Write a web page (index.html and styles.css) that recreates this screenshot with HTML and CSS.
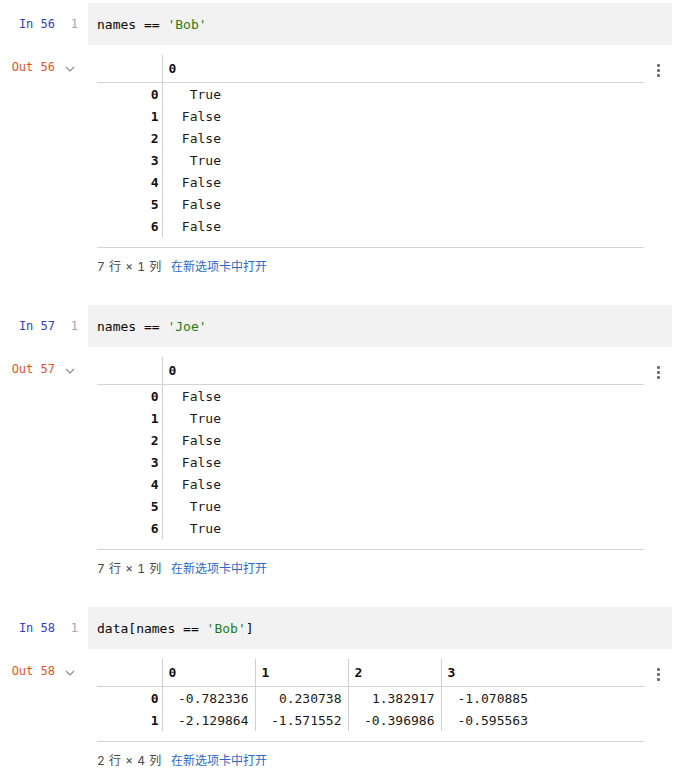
FILE: index.html
```html
<!DOCTYPE html>
<html>
<head>
<meta charset="utf-8">
<link rel="stylesheet" href="styles.css">
</head>
<body>
<div class="notebook">

  <div class="cell">
    <div class="in-row">
      <div class="prompt in">In 56</div>
      <div class="lineno">1</div>
      <div class="code">names == <span class="str">'Bob'</span></div>
    </div>
    <div class="out-row">
      <div class="prompt out">Out 56</div>
      <div class="toggle"><svg width="10" height="6" viewBox="0 0 10 6"><path d="M1 1 L5 5 L9 1" fill="none" stroke="#8c8c8c" stroke-width="1.2"/></svg></div>
      <div class="output">
        <table class="df">
          <colgroup><col class="c-idx"><col class="c-narrow"><col></colgroup>
          <thead><tr><th class="idx"></th><th class="last">0</th><th class="fill"></th></tr></thead>
          <tbody>
            <tr><th class="idx">0</th><td class="last">True</td><td class="fill"></td></tr>
            <tr><th class="idx">1</th><td class="last">False</td><td class="fill"></td></tr>
            <tr><th class="idx">2</th><td class="last">False</td><td class="fill"></td></tr>
            <tr><th class="idx">3</th><td class="last">True</td><td class="fill"></td></tr>
            <tr><th class="idx">4</th><td class="last">False</td><td class="fill"></td></tr>
            <tr><th class="idx">5</th><td class="last">False</td><td class="fill"></td></tr>
            <tr><th class="idx">6</th><td class="last">False</td><td class="fill"></td></tr>
          </tbody>
        </table>
        <div class="footer"><span class="dims">7 行 × 1 列</span><span class="link">在新选项卡中打开</span></div>
      </div>
      <div class="kebab"><span></span><span></span><span></span></div>
    </div>
  </div>

  <div class="cell">
    <div class="in-row">
      <div class="prompt in">In 57</div>
      <div class="lineno">1</div>
      <div class="code">names == <span class="str">'Joe'</span></div>
    </div>
    <div class="out-row">
      <div class="prompt out">Out 57</div>
      <div class="toggle"><svg width="10" height="6" viewBox="0 0 10 6"><path d="M1 1 L5 5 L9 1" fill="none" stroke="#8c8c8c" stroke-width="1.2"/></svg></div>
      <div class="output">
        <table class="df">
          <colgroup><col class="c-idx"><col class="c-narrow"><col></colgroup>
          <thead><tr><th class="idx"></th><th class="last">0</th><th class="fill"></th></tr></thead>
          <tbody>
            <tr><th class="idx">0</th><td class="last">False</td><td class="fill"></td></tr>
            <tr><th class="idx">1</th><td class="last">True</td><td class="fill"></td></tr>
            <tr><th class="idx">2</th><td class="last">False</td><td class="fill"></td></tr>
            <tr><th class="idx">3</th><td class="last">False</td><td class="fill"></td></tr>
            <tr><th class="idx">4</th><td class="last">False</td><td class="fill"></td></tr>
            <tr><th class="idx">5</th><td class="last">True</td><td class="fill"></td></tr>
            <tr><th class="idx">6</th><td class="last">True</td><td class="fill"></td></tr>
          </tbody>
        </table>
        <div class="footer"><span class="dims">7 行 × 1 列</span><span class="link">在新选项卡中打开</span></div>
      </div>
      <div class="kebab"><span></span><span></span><span></span></div>
    </div>
  </div>

  <div class="cell">
    <div class="in-row">
      <div class="prompt in">In 58</div>
      <div class="lineno">1</div>
      <div class="code">data[names == <span class="str">'Bob'</span>]</div>
    </div>
    <div class="out-row">
      <div class="prompt out">Out 58</div>
      <div class="toggle"><svg width="10" height="6" viewBox="0 0 10 6"><path d="M1 1 L5 5 L9 1" fill="none" stroke="#8c8c8c" stroke-width="1.2"/></svg></div>
      <div class="output">
        <table class="df">
          <colgroup><col class="c-idx"><col class="c-wide"><col class="c-wide"><col class="c-wide"><col class="c-wide"><col></colgroup>
          <thead><tr><th class="idx"></th><th>0</th><th>1</th><th>2</th><th class="last">3</th><th class="fill"></th></tr></thead>
          <tbody>
            <tr><th class="idx">0</th><td>-0.782336</td><td>0.230738</td><td>1.382917</td><td class="last">-1.070885</td><td class="fill"></td></tr>
            <tr><th class="idx">1</th><td>-2.129864</td><td>-1.571552</td><td>-0.396986</td><td class="last">-0.595563</td><td class="fill"></td></tr>
          </tbody>
        </table>
        <div class="footer"><span class="dims">2 行 × 4 列</span><span class="link">在新选项卡中打开</span></div>
      </div>
      <div class="kebab"><span></span><span></span><span></span></div>
    </div>
  </div>

</div>
</body>
</html>
```

FILE: styles.css
```css
html, body {
  margin: 0;
  padding: 0;
  background: #ffffff;
}

.notebook {
  width: 679px;
  padding-top: 3px;
  font-family: "DejaVu Sans Mono", "Liberation Mono", monospace;
}

.cell {
  margin-bottom: 30px;
}

.in-row {
  display: flex;
  align-items: center;
  height: 42px;
}

.prompt {
  width: 55px;
  flex: none;
  text-align: right;
  font-size: 12px;
  line-height: 16px;
}

.prompt.in {
  color: #2f3fc4;
}

.prompt.out {
  color: #e5522a;
}

.lineno {
  width: 23px;
  flex: none;
  padding-right: 10px;
  text-align: right;
  font-size: 12px;
  color: #a6a6a6;
}

.code {
  flex: 1;
  height: 42px;
  margin-right: 7px;
  padding-left: 9px;
  display: flex;
  align-items: center;
  background: #f2f2f2;
  font-size: 13px;
  color: #080808;
  white-space: pre;
}

.str {
  color: #1f7d1a;
}

.out-row {
  display: flex;
  margin-top: 10px;
}

.out-row .prompt {
  padding-top: 4px;
  height: 16px;
}

.toggle {
  width: 33px;
  flex: none;
  padding-top: 11px;
  padding-left: 10px;
  box-sizing: border-box;
  line-height: 0;
}

.output {
  width: 547px;
  flex: none;
  margin-left: 9px;
}

.df {
  width: 100%;
  border-collapse: collapse;
  table-layout: fixed;
  font-size: 13px;
  color: #1a1a1a;
}

.c-idx { width: 65px; }
.c-narrow { width: 65px; }
.c-wide { width: 93px; }

.df th, .df td {
  padding: 0;
  white-space: pre;
  overflow: hidden;
}

.df thead th {
  height: 27px;
  text-align: left;
  padding-left: 6px;
  font-weight: bold;
  color: #111;
  border-bottom: 1px solid #d3d3d3;
  border-right: 1px solid #cfcfcf;
  vertical-align: middle;
}

.df thead th.idx {
  padding-left: 0;
}

.df tbody td, .df tbody th {
  height: 22px;
  vertical-align: middle;
}

.df tbody td {
  text-align: right;
  padding-right: 6px;
  border-right: 1px solid #cfcfcf;
}

.df tbody th.idx {
  text-align: right;
  padding-right: 3px;
  font-weight: bold;
  color: #111;
  border-right: 1px solid #cfcfcf;
}

.df th.last, .df td.last {
  border-right: none;
}

.df .fill {
  border-right: none;
}

.footer {
  margin-top: 10px;
  border-top: 1px solid #d3d3d3;
  padding-top: 11px;
  height: 16px;
  line-height: 16px;
  font-family: "Inter", "Noto Sans CJK SC", sans-serif;
  font-size: 12px;
}

.dims {
  display: inline-block;
  width: 74px;
  color: #4a4a4a;
  word-spacing: 1px;
  font-variant-numeric: tabular-nums;
  white-space: nowrap;
}

.link {
  color: #2b6ac4;
}

.kebab {
  width: 28px;
  flex: none;
  display: flex;
  flex-direction: column;
  align-items: center;
  gap: 2px;
  padding-top: 9px;
}

.kebab span {
  width: 3px;
  height: 3px;
  background: #6e6e6e;
  border-radius: 1px;
}
```
